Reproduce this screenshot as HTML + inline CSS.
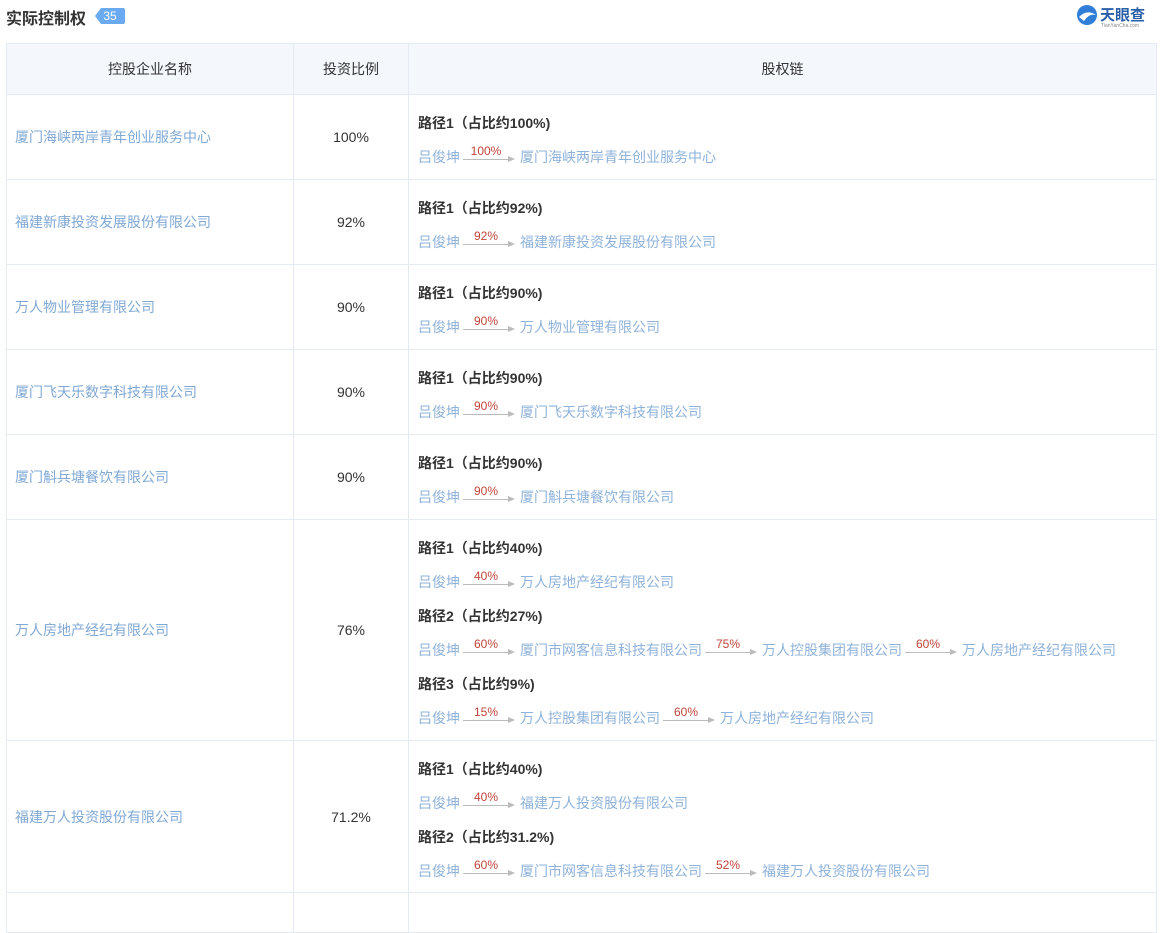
<!DOCTYPE html><html><head><meta charset="utf-8"><style>
body{margin:0;background:#fff;font-family:"Liberation Sans","Noto Sans CJK SC",sans-serif;font-size:14px;color:#333;width:1164px;height:898px;overflow:hidden;position:relative}
.title{position:absolute;left:6px;top:5px;font-size:16px;color:#333;font-weight:bold}
.badge{position:absolute;left:95px;top:8px;height:16px;width:30px;background:#6aaaf0;color:#fff;font-size:12px;line-height:16px;text-align:center;border-radius:2px;clip-path:polygon(6px 0,100% 0,100% 100%,6px 100%,0 50%)}
.logo{position:absolute;left:1076px;top:3px;width:80px;height:26px}
table{position:absolute;left:6px;top:43px;border-collapse:collapse;width:1151px}
td,th{border:1px solid #e5ebf2;padding:0}
th{background:#f4f8fc;height:50px;font-weight:normal;color:#333}
td.n{color:#7fa8d4;padding-left:8px}
td.p{text-align:center;color:#333}
td.c{padding-left:9px;vertical-align:top}
.pt{font-weight:bold;color:#333;height:23px;line-height:23px;margin-top:17px}
.ch{height:22px;line-height:22px;color:#8eb2da;margin-top:11px;white-space:nowrap}
.ar{display:inline-block;position:relative;width:52px;height:22px;margin:0 5px 0 3px;vertical-align:top}
.ar i{position:absolute;left:0;right:6px;top:13px;border-top:1px solid #bbb}
.ar b{position:absolute;right:0;top:10px;border-left:7px solid #bbb;border-top:3px solid transparent;border-bottom:3px solid transparent}
.ar s{position:absolute;left:0;right:6px;top:-2px;text-decoration:none;text-align:center;color:#c0453a;font-size:12px;line-height:14px}
</style></head><body>
<div class="title">实际控制权</div><div class="badge">35</div>
<svg class="logo" viewBox="0 0 80 26"><circle cx="11" cy="12" r="10" fill="#2f7fd8"/><path d="M3 14 Q11 6 20 12 Q13 10 8 18Z" fill="#fff"/><text x="24" y="17" font-size="15" font-weight="bold" fill="#2a5fa8" font-family="Liberation Sans,Noto Sans CJK SC,sans-serif">天眼查</text><text x="25" y="24" font-size="5" fill="#888" font-family="Liberation Sans,sans-serif">TianYanCha.com</text></svg>
<table>
<tr><th style="width:286px">控股企业名称</th><th style="width:114px">投资比例</th><th>股权链</th></tr>
<tr style="height:85px"><td class="n">厦门海峡两岸青年创业服务中心</td><td class="p">100%</td><td class="c"><div class="pt">路径1（占比约100%)</div><div class="ch">吕俊坤<span class="ar"><s>100%</s><i></i><b></b></span>厦门海峡两岸青年创业服务中心</div></td></tr>
<tr style="height:85px"><td class="n">福建新康投资发展股份有限公司</td><td class="p">92%</td><td class="c"><div class="pt">路径1（占比约92%)</div><div class="ch">吕俊坤<span class="ar"><s>92%</s><i></i><b></b></span>福建新康投资发展股份有限公司</div></td></tr>
<tr style="height:85px"><td class="n">万人物业管理有限公司</td><td class="p">90%</td><td class="c"><div class="pt">路径1（占比约90%)</div><div class="ch">吕俊坤<span class="ar"><s>90%</s><i></i><b></b></span>万人物业管理有限公司</div></td></tr>
<tr style="height:85px"><td class="n">厦门飞天乐数字科技有限公司</td><td class="p">90%</td><td class="c"><div class="pt">路径1（占比约90%)</div><div class="ch">吕俊坤<span class="ar"><s>90%</s><i></i><b></b></span>厦门飞天乐数字科技有限公司</div></td></tr>
<tr style="height:85px"><td class="n">厦门斛兵塘餐饮有限公司</td><td class="p">90%</td><td class="c"><div class="pt">路径1（占比约90%)</div><div class="ch">吕俊坤<span class="ar"><s>90%</s><i></i><b></b></span>厦门斛兵塘餐饮有限公司</div></td></tr>
<tr style="height:221px"><td class="n">万人房地产经纪有限公司</td><td class="p">76%</td><td class="c">
<div class="pt">路径1（占比约40%)</div><div class="ch">吕俊坤<span class="ar"><s>40%</s><i></i><b></b></span>万人房地产经纪有限公司</div>
<div class="pt" style="margin-top:12px">路径2（占比约27%)</div><div class="ch">吕俊坤<span class="ar"><s>60%</s><i></i><b></b></span>厦门市网客信息科技有限公司<span class="ar"><s>75%</s><i></i><b></b></span>万人控股集团有限公司<span class="ar"><s>60%</s><i></i><b></b></span>万人房地产经纪有限公司</div>
<div class="pt" style="margin-top:12px">路径3（占比约9%)</div><div class="ch">吕俊坤<span class="ar"><s>15%</s><i></i><b></b></span>万人控股集团有限公司<span class="ar"><s>60%</s><i></i><b></b></span>万人房地产经纪有限公司</div></td></tr>
<tr style="height:152px"><td class="n">福建万人投资股份有限公司</td><td class="p">71.2%</td><td class="c">
<div class="pt">路径1（占比约40%)</div><div class="ch">吕俊坤<span class="ar"><s>40%</s><i></i><b></b></span>福建万人投资股份有限公司</div>
<div class="pt" style="margin-top:12px">路径2（占比约31.2%)</div><div class="ch">吕俊坤<span class="ar"><s>60%</s><i></i><b></b></span>厦门市网客信息科技有限公司<span class="ar"><s>52%</s><i></i><b></b></span>福建万人投资股份有限公司</div></td></tr>
<tr style="height:40px"><td></td><td></td><td></td></tr>
</table>
</body></html>
